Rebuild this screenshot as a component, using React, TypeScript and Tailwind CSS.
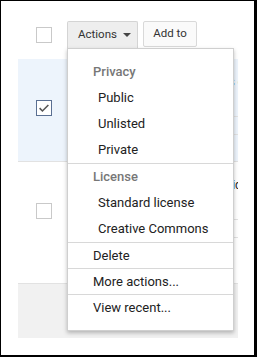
import React from "react";

const groups = [
  { header: "Privacy", items: ["Public", "Unlisted", "Private"] },
  { header: "License", items: ["Standard license", "Creative Commons"] },
];

const singles = ["Delete", "More actions...", "View recent..."];

const rows = [
  { checked: true, h: "h-[103px]", bg: "bg-[#edf4fc]", title: "Weekend trip highlights ex", meta: "Uploaded 12 Mar 2013" },
  { checked: false, h: "h-[122px]", bg: "bg-white", title: "Product launch recap video ex", meta: "Uploaded 02 Feb 2013" },
];

const Checkbox = ({ checked }: { checked?: boolean }) => (
  <div
    className={
      "flex h-4 w-4 items-center justify-center bg-white border " +
      (checked ? "border-[#5a6f92]" : "border-[#c9c9c9]")
    }
  >
    {checked && (
      <svg viewBox="0 0 16 16" className="h-3.5 w-3.5" fill="none" stroke="#555" strokeWidth="1.8">
        <path d="M3 8.2l3.2 3.2L13 4.6" />
      </svg>
    )}
  </div>
);

const ActionsMenu = () => (
  <div className="absolute left-[66px] top-[47px] w-[167px] border border-[#cfcfcf] bg-white pt-[10px] pb-[10px] shadow-[0_2px_4px_rgba(0,0,0,0.25)] text-[13px]">
    {groups.map((g, i) => (
      <div key={g.header} className={i > 0 ? "border-t border-[#d8d8d8]" : ""}>
        <div className="flex h-[26px] items-center pl-[25px] font-medium text-[#777]">{g.header}</div>
        {g.items.map((it) => (
          <div key={it} className="flex h-[26px] items-center pl-[30px] text-[#222]">
            {it}
          </div>
        ))}
      </div>
    ))}
    {singles.map((s) => (
      <div key={s} className="flex h-[26px] items-center border-t border-[#d8d8d8] pl-[25px] text-[#222]">
        {s}
      </div>
    ))}
  </div>
);

export default function App() {
  return (
    <div className="relative h-[357px] w-[257px] overflow-hidden border-l border-t border-r-[3px] border-b-2 border-black bg-white font-['Roboto',sans-serif]">
      <div className="w-[237px] pl-[17px] pt-5">
        {/* toolbar */}
        <div className="flex h-[27px] items-start">
          <div className="ml-[18px] mt-[6px]">
            <Checkbox />
          </div>
          <div className="ml-[15px] flex h-[27px] w-[71px] items-center rounded-t-[2px] border border-b-0 border-[#d4d4d4] bg-[#eeeeee] pl-[10px] text-[11.5px] text-[#333]">
            Actions
            <span className="ml-[6px] h-0 w-0 border-l-[4px] border-r-[4px] border-t-[4px] border-l-transparent border-r-transparent border-t-[#444]" />
          </div>
          <div className="ml-[5px] flex h-[26px] w-[54px] items-center justify-center rounded-[2px] border border-[#d9d9d9] bg-[#fafafa] text-[11.5px] text-[#333]">
            Add to
          </div>
        </div>

        {/* table */}
        <div className="mt-[11px] w-[220px]">
          {rows.map((r, i) => (
            <div key={i} className={"flex border-b border-[#e2e2e2] " + r.h + " " + r.bg}>
              <div className="w-[52px] shrink-0 pl-[18px] pt-[41px]">
                <Checkbox checked={r.checked} />
              </div>
              <div className="min-w-0 flex-1 overflow-hidden pt-[15px] pl-[40px]">
                <div className="whitespace-nowrap text-[12px] leading-[16px] text-[#222]">{r.title}</div>
                <div className="whitespace-nowrap text-[11px] leading-[16px] text-[#888]">{r.meta}</div>
                <div className="mt-[10px] h-[19px] border-y border-[#e2e2e2]" />
              </div>
            </div>
          ))}
          <div className="h-[54px] bg-[#f1f1f1]" />
        </div>
      </div>
      <ActionsMenu />
    </div>
  );
}
